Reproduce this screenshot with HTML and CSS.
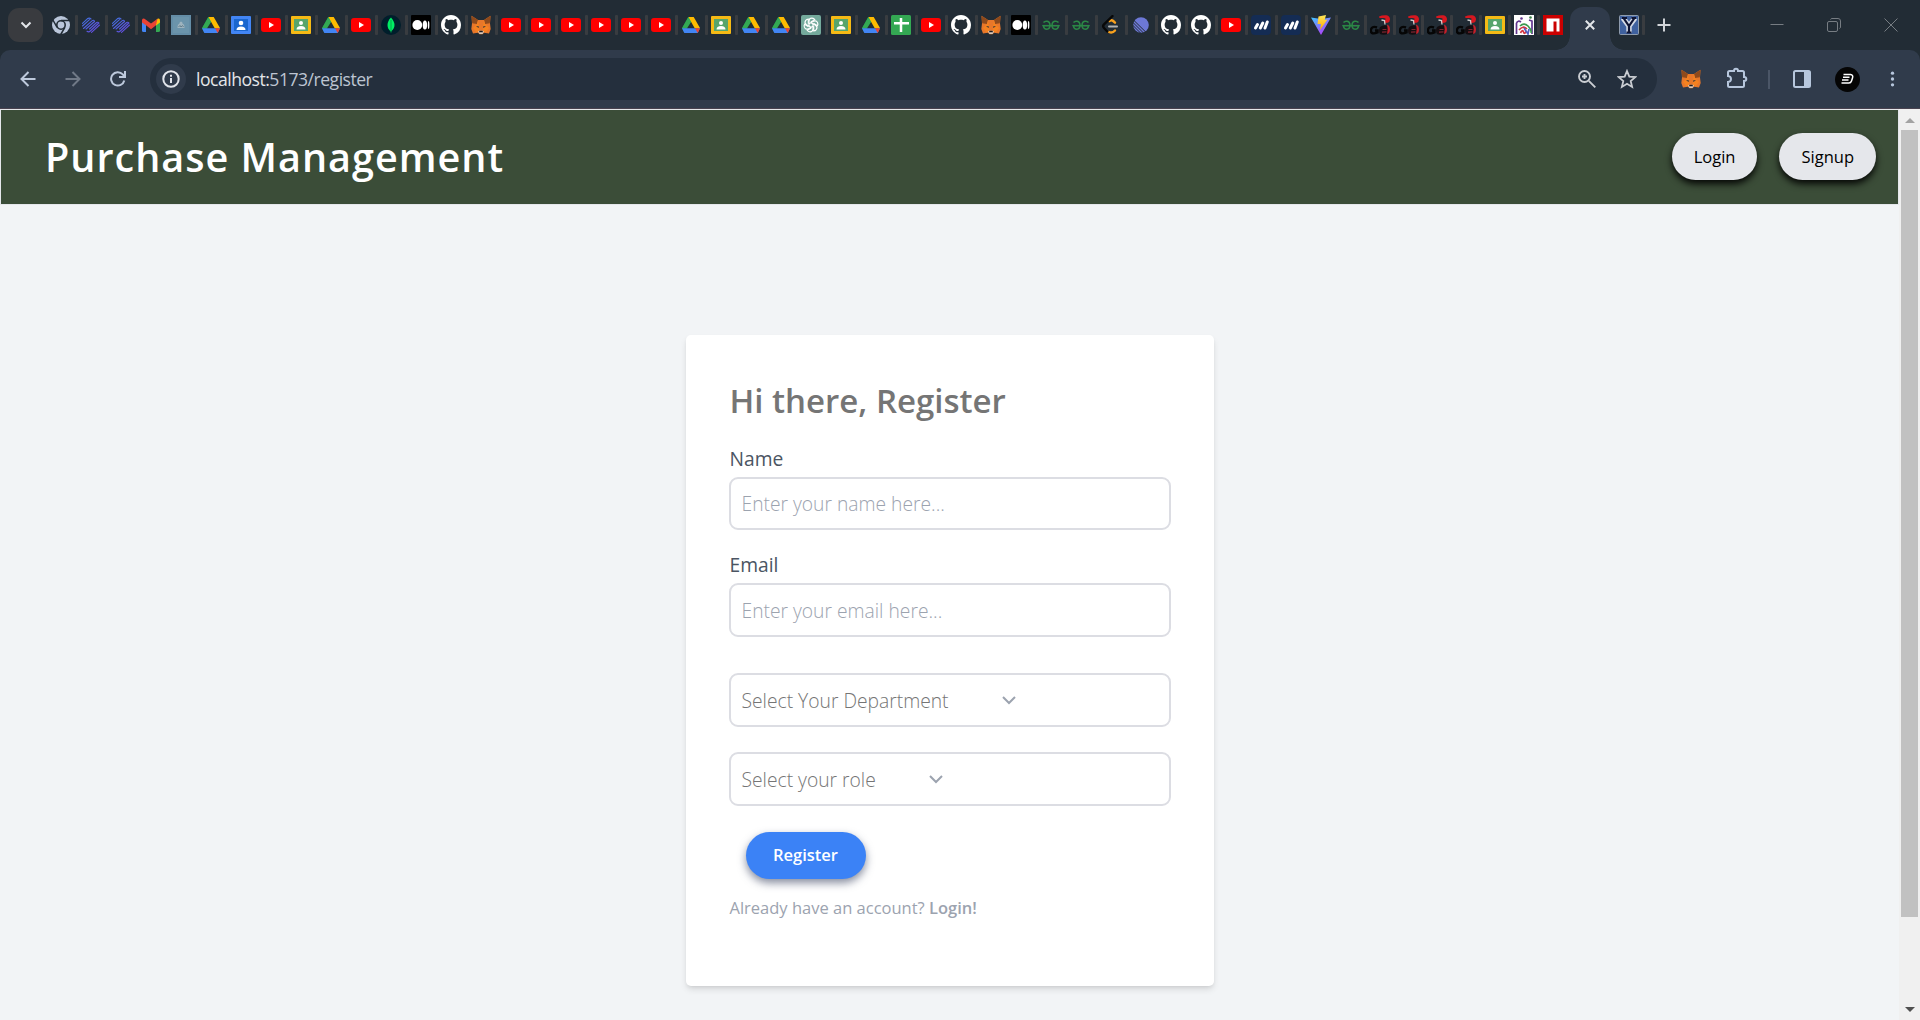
FILE: index.html
```html
<!DOCTYPE html>
<html lang="en">
<head>
<meta charset="utf-8">
<title>Purchase Management</title>
<link rel="stylesheet" href="styles.css">
</head>
<body>
<svg class="sprite" aria-hidden="true">
  <defs>
    <linearGradient id="wave-g" x1="0" y1="0" x2="1" y2="1"><stop offset="0" stop-color="#3f74e0"/><stop offset="1" stop-color="#6a45dc"/></linearGradient>
    <linearGradient id="vite-g" x1="0" y1="0" x2=".6" y2="1"><stop offset="0" stop-color="#41c7ff"/><stop offset="1" stop-color="#b33dfa"/></linearGradient>
    <linearGradient id="bolt-g" x1="0" y1="0" x2="0" y2="1"><stop offset="0" stop-color="#ffe65a"/><stop offset="1" stop-color="#ffa800"/></linearGradient>
  </defs>
  <symbol id="chrome" viewBox="0 0 20 20"><circle cx="10" cy="10" r="9" fill="#bac6da"/><circle cx="10" cy="10" r="4.2" fill="#bac6da" stroke="#222c35" stroke-width="1.6"/><path d="M10 5.5h8.5M6.1 12.3 1.9 5M13.9 12.3 9.7 19.5" stroke="#222c35" stroke-width="1.5"/></symbol>
  <symbol id="wave" viewBox="0 0 20 20"><g fill="none" stroke="url(#wave-g)" stroke-width="1.1" stroke-linecap="round" stroke-linejoin="round"><path d="M1.500 8.300 6.300 3.800Q8.300 2.300 10 4M1.500 11 8.500 4.700M2.500 13.500 11 5.800Q12.300 4.600 13.500 6M5 14 13.500 6.500M6 16.300Q7.800 17.500 9.300 16L17.800 8M8.500 14 15 8Q16.700 6.500 18 8M10.500 17.300 18.500 10"/></g></symbol>
  <symbol id="gmail" viewBox="0 0 20 20"><path d="M1 5v10.500q0 1.500 1.500 1.500H5V9z" fill="#4285f4"/><path d="M15 9v8h2.500q1.500 0 1.500-1.500V5z" fill="#34a853"/><path d="m15 5.500 1.500-1.800Q19 2.700 19 5.500v2L15 10.500z" fill="#fbbc04"/><path d="M1 7.500v-2Q1 2.700 3.500 3.700L10 8.600l6.500-4.900L15 10.300l-5 3.900-5-3.900z" fill="#ea4335"/></symbol>
  <symbol id="photo" viewBox="0 0 20 20"><path fill="#648da6" d="M0 0h20v20H0z"/><path d="M2 2h16v16H2z" fill="#719bb0" opacity=".5"/><path d="M6.500 13q0-4 1.700-4 .3-2.500 1.800-2.500T11.800 9q1.700 0 1.700 4z" fill="#9fb4bf"/><path d="m7.500 12 1.500-1.500 1 1.500 1.500-1.500 1 1.500" stroke="#627d8a" fill="none"/></symbol>
  <symbol id="drive" viewBox="0 0 20 20"><path d="M7.300 2h5.400L5 14.800 3.300 17.500 1 13.200z" fill="#0f9d48"/><path d="M7.300 2h5.400L19 13h-5.400z" fill="#ffba00"/><path d="M10 7 5.900 13.200H1L7.300 2z" fill="#34a853"/><path d="M5.900 13.200H19L16.700 18H3.300L1 13.200z" fill="#4285f4"/><path d="M14 13.200h5L16.700 18z" fill="#ea4335"/></symbol>
  <symbol id="contacts" viewBox="0 0 20 20"><rect y="1" width="20" height="18" rx="1" fill="#4285f4"/><path d="M3 4h14v12H3z" fill="#1a66ce"/><circle cx="10" cy="8" r="2.300" fill="#fff"/><path d="M5.500 15q0-3.500 4.500-3.500t4.500 3.500z" fill="#fff"/></symbol>
  <symbol id="yt" viewBox="0 0 20 20"><rect y="3" width="20" height="14" rx="3" fill="#f00"/><path d="m8 7 5 3-5 3z" fill="#fff"/></symbol>
  <symbol id="class" viewBox="0 0 20 20"><rect y="1" width="20" height="18" rx="1" fill="#f5ba15"/><path d="M3 4h14v12H3z" fill="#57a56b"/><circle cx="10" cy="8" r="2" fill="#fff"/><path d="M5.500 14.500q0-3.500 4.500-3.500t4.500 3.500z" fill="#fff"/></symbol>
  <symbol id="mongo" viewBox="0 0 20 20"><circle cx="10" cy="10" r="10" fill="#001e2b"/><path d="M10 2.500q3.500 4 3.500 7.500T10 16.500Q6.500 14 6.500 10T10 2.500z" fill="#00ed64"/><path d="M10 5v12.500" stroke="#00a84a"/></symbol>
  <symbol id="medium" viewBox="0 0 20 20"><rect width="20" height="20" rx="1" fill="#000"/><circle cx="6.300" cy="10" r="4.900" fill="#fff"/><ellipse cx="13.900" cy="10" rx="2.200" ry="4.500" fill="#fff"/><ellipse cx="17.600" cy="10" rx=".8" ry="4" fill="#fff"/></symbol>
  <symbol id="github" viewBox="0 0 16 16"><path fill="#fff" d="M8 0C3.580 0 0 3.580 0 8c0 3.540 2.290 6.530 5.470 7.590.4.070.55-.17.55-.38 0-.19-.01-.82-.01-1.490-2.010.37-2.530-.49-2.690-.94-.09-.23-.48-.94-.82-1.130-.28-.15-.68-.52-.01-.53.63-.01 1.080.58 1.230.82.72 1.210 1.870.87 2.330.66.07-.52.28-.87.51-1.070-1.780-.2-3.640-.89-3.640-3.950 0-.87.31-1.590.82-2.150-.08-.2-.36-1.020.08-2.120 0 0 .67-.21 2.200.82.640-.18 1.320-.27 2-.27s1.360.09 2 .27c1.530-1.040 2.200-.82 2.200-.82.44 1.100.16 1.920.08 2.120.51.56.82 1.270.82 2.150 0 3.070-1.870 3.750-3.650 3.950.29.25.54.73.54 1.480 0 1.070-.01 1.930-.01 2.200 0 .21.15.46.55.38A8.010 8.010 0 0 0 16 8c0-4.420-3.580-8-8-8z"/></symbol>
  <symbol id="fox" viewBox="0 0 20 20"><path d="M.5.800 7 5h6L19.500.800l-.5 7.700.7 5.500-1.700 4.500-5-.8-1.500 1.500h-3L7 17.700l-5 .8L.3 14 1 8.500z" fill="#e8772a"/><path d="m.5.800 6.500 4.200L6 9 1.200 8.300zM19.500.800 13 5l1 4 4.800-.7z" fill="#8f4a1c"/><path d="m7 5 1 6v6H5l-3-4 4-4zM13 5l-1 6v6h3l3-4-4-4z" fill="#f58220"/><path d="m5 11 3 .5-.5 1.500zM15 11l-3 .5.5 1.500z" fill="#31333a"/><path d="m7 16.500 1-.7h4l1 .7-1.500 2.500h-3z" fill="#dccab9"/><path d="M8.500 15.700h3l.5 1.500H8z" fill="#1c1b1d"/></symbol>
  <symbol id="gpt" viewBox="0 0 20 20"><rect width="20" height="20" rx="2" fill="#74aa9c"/><g fill="none" stroke="#fff" stroke-width="1.150"><path id="petal" d="M8 11.200V6Q8.200 3 11 3.100q2 .2 2.800 1.600L9.800 7"/><use href="#petal" transform="rotate(60 10 10)"/><use href="#petal" transform="rotate(120 10 10)"/><use href="#petal" transform="rotate(180 10 10)"/><use href="#petal" transform="rotate(240 10 10)"/><use href="#petal" transform="rotate(300 10 10)"/></g></symbol>
  <symbol id="sheet" viewBox="0 0 20 20"><rect width="20" height="20" rx="1.500" fill="#34a853"/><path d="M3 8.200h15M10 3v14" stroke="#fff" stroke-width="2.500"/></symbol>
  <symbol id="gfg" viewBox="0 0 20 20"><path d="M2.500 7.500Q4 5.800 6.300 6.300 9 7 9 10.300q0 3.900-3.200 3.900-2.800 0-3.500-3.400H17.700q-.7 3.400-3.500 3.400-3.200 0-3.200-3.900 0-3.300 2.700-4 2.300-.5 3.800 1.200" fill="none" stroke="#2b8746" stroke-width="1.500"/><path d="M1.500 10.500h17" stroke="#2b8746" stroke-width="1.200"/></symbol>
  <symbol id="leet" viewBox="0 0 20 20"><g fill="none" stroke-width="2.400" stroke-linecap="round"><path d="m8.500 6 .5-.4q1.700-1 3.200.4l1.800 1.700M8 17q3.500 1.500 6-1.500" stroke="#f7a01d"/><path d="m11.500 1-8.500 8.400Q1.300 11.200 3 13l3.300 3.500" stroke="#080808"/><path d="M8 11.500h8" stroke="#b3b3b3" stroke-width="2"/></g></symbol>
  <symbol id="linear" viewBox="0 0 20 20"><circle cx="10" cy="10" r="7.800" fill="#6d78d6"/><path d="m1.500 7 11.500 11.500M1.500 10l9 9M1.500 13.300 7 18.800M3 5.500l12.500 12.300" stroke="#222c35" stroke-width="1"/></symbol>
  <symbol id="mono" viewBox="0 0 20 20"><rect width="20" height="20" rx="4" fill="#142c54"/><path d="m4.500 13 2-3.500M9.300 13l2.500-5M14 13l2.300-6" stroke="#fff" stroke-width="3" stroke-linecap="round"/></symbol>
  <symbol id="vite" viewBox="0 0 20 20"><path d="m0 2.500 10 1.500L20 2.500 10 20z" fill="url(#vite-g)"/><path d="m7.500 1.500 7.500-1.500-1.300 5 2.800-.4L9 15l1-6H6.500z" fill="url(#bolt-g)"/></symbol>
  <symbol id="go" viewBox="0 0 20 20"><path d="M9 1.500Q12 0 16.500.3 20 1 20 4.500q0 2.500-2.500 3.300L14 8V5.500l2-1.500-2-1H9.500z" fill="#d7171f"/><path d="M7 12.500Q1.500 10.500.800 15.500 1 20 7.500 17.500V15.500H5" fill="none" stroke="#050505" stroke-width="2.400"/><path d="M10 12q4-3 8-1v8q-5 1.500-8 0-2-3 0-7z" fill="#130d10"/><path d="M17 9.500q3 1 3 5T17 19q1.500-4.500 0-9.500z" fill="#c2202a"/><path d="M12.500 14.500h4M12 17.200l4.500-.4" stroke="#7b2630" stroke-width="1.200"/><path d="m11.500 5 3 .5.500 4" stroke="#ccc" fill="none" stroke-width="1.300"/></symbol>
  <symbol id="doodle" viewBox="0 0 20 20"><path fill="#fff" d="M0 0h20v20H0z"/><g fill="none" stroke-width="1.700"><path d="M2.500 19V8M2.500 8Q4 5 7 7M15 5l3 1v13" stroke="#63358f"/><path d="M6 11q4-4 8 0t3 7" stroke="#3c9950"/><path d="M5 15q4-5 8-1M6.500 18q2-4 3-1t3-1" stroke="#d13542"/><path d="m10 13 4 6 1-5" stroke="#525fc2"/></g><circle cx="7.500" cy="3.500" r="1.300" fill="#63358f"/><circle cx="16.500" cy="2.500" r="1.300" fill="#3b8146"/></symbol>
  <symbol id="npm" viewBox="0 0 20 20"><path fill="#cb0000" d="M0 0h20v20H0z"/><path fill="#fff" d="M3.500 3.500h13v13h-3v-10h-3v10h-7z"/></symbol>
  <symbol id="ybox" viewBox="0 0 20 20"><rect x=".5" y=".5" width="19" height="19" rx="1" fill="#3f619f" stroke="#8e9bad"/><path d="m4 3 6 8 6-8M10 10v8" stroke="#d4dae6" stroke-width="5.400" fill="none"/><path d="m4.500 3 5.500 8 5.500-8M10 10v7.500M3 3h5M12.500 3h4.500M7.500 17.500h5" stroke="#0e1434" stroke-width="2.200" fill="none"/></symbol>
</svg>

<header class="browser">
  <div class="tabstrip">
    <button class="tab-search"><svg viewBox="0 0 12 8"><path d="m1.500 1.500 4.500 4.500 4.500-4.500"/></svg></button>
    <div class="tabs">
      <span class="tab"><svg><use href="#chrome"/></svg></span>
      <span class="tab"><svg><use href="#wave"/></svg></span>
      <span class="tab"><svg><use href="#wave"/></svg></span>
      <span class="tab"><svg><use href="#gmail"/></svg></span>
      <span class="tab"><svg><use href="#photo"/></svg></span>
      <span class="tab"><svg><use href="#drive"/></svg></span>
      <span class="tab"><svg><use href="#contacts"/></svg></span>
      <span class="tab"><svg><use href="#yt"/></svg></span>
      <span class="tab"><svg><use href="#class"/></svg></span>
      <span class="tab"><svg><use href="#drive"/></svg></span>
      <span class="tab"><svg><use href="#yt"/></svg></span>
      <span class="tab"><svg><use href="#mongo"/></svg></span>
      <span class="tab"><svg><use href="#medium"/></svg></span>
      <span class="tab"><svg><use href="#github"/></svg></span>
      <span class="tab"><svg><use href="#fox"/></svg></span>
      <span class="tab"><svg><use href="#yt"/></svg></span>
      <span class="tab"><svg><use href="#yt"/></svg></span>
      <span class="tab"><svg><use href="#yt"/></svg></span>
      <span class="tab"><svg><use href="#yt"/></svg></span>
      <span class="tab"><svg><use href="#yt"/></svg></span>
      <span class="tab"><svg><use href="#yt"/></svg></span>
      <span class="tab"><svg><use href="#drive"/></svg></span>
      <span class="tab"><svg><use href="#class"/></svg></span>
      <span class="tab"><svg><use href="#drive"/></svg></span>
      <span class="tab"><svg><use href="#drive"/></svg></span>
      <span class="tab"><svg><use href="#gpt"/></svg></span>
      <span class="tab"><svg><use href="#class"/></svg></span>
      <span class="tab"><svg><use href="#drive"/></svg></span>
      <span class="tab"><svg><use href="#sheet"/></svg></span>
      <span class="tab"><svg><use href="#yt"/></svg></span>
      <span class="tab"><svg><use href="#github"/></svg></span>
      <span class="tab"><svg><use href="#fox"/></svg></span>
      <span class="tab"><svg><use href="#medium"/></svg></span>
      <span class="tab"><svg><use href="#gfg"/></svg></span>
      <span class="tab"><svg><use href="#gfg"/></svg></span>
      <span class="tab"><svg><use href="#leet"/></svg></span>
      <span class="tab"><svg><use href="#linear"/></svg></span>
      <span class="tab"><svg><use href="#github"/></svg></span>
      <span class="tab"><svg><use href="#github"/></svg></span>
      <span class="tab"><svg><use href="#yt"/></svg></span>
      <span class="tab"><svg><use href="#mono"/></svg></span>
      <span class="tab"><svg><use href="#mono"/></svg></span>
      <span class="tab"><svg><use href="#vite"/></svg></span>
      <span class="tab narrow"><svg><use href="#gfg"/></svg></span>
      <span class="tab narrow"><svg><use href="#go"/></svg></span>
      <span class="tab narrow"><svg><use href="#go"/></svg></span>
      <span class="tab narrow"><svg><use href="#go"/></svg></span>
      <span class="tab narrow"><svg><use href="#go"/></svg></span>
      <span class="tab narrow"><svg><use href="#class"/></svg></span>
      <span class="tab narrow"><svg><use href="#doodle"/></svg></span>
      <span class="tab narrow last"><svg><use href="#npm"/></svg></span>
    </div>
    <div class="tab-active"><svg viewBox="0 0 10 10"><path d="m.8.8 8.400 8.400M9.200.8.8 9.200"/></svg></div>
    <span class="tab after"><svg><use href="#ybox"/></svg></span>
    <svg class="new-tab" viewBox="0 0 14 14"><path d="M7 .5v13M.5 7h13"/></svg>
    <div class="window-controls">
      <svg viewBox="0 0 14 14"><path d="M.5 6.500h13"/></svg>
      <svg viewBox="0 0 14 14"><rect x=".5" y="3.500" width="10" height="10" rx="1.500"/><path d="M3.500 1.500q.5-1 1.500-1h6q2.500 0 2.500 2.500v6q0 1-1 1.500"/></svg>
      <svg viewBox="0 0 14 14"><path d="m.5.5 13 13M13.500.5l-13 13"/></svg>
    </div>
  </div>
  <div class="toolbar">
    <div class="nav">
      <svg viewBox="0 0 16 16"><path d="M15.500 8H2M8.500 1 1.500 8l7 7"/></svg>
      <svg class="dim" viewBox="0 0 16 16"><path d="M.5 8H14M7.500 1l7 7-7 7"/></svg>
      <svg viewBox="0 0 16 16"><path d="M14.300 9.500A6.700 6.700 0 1 1 12.800 3.400L14.500 5.500M15 0v6H9"/></svg>
    </div>
    <div class="omnibox">
      <span class="site-info"><svg viewBox="0 0 18 18"><circle cx="9" cy="9" r="7.700"/><path d="M9 8v5M9 4.800v2"/></svg></span>
      <span class="url">localhost:<span>5173/register</span></span>
      <svg class="magnify" viewBox="0 0 18 18"><circle cx="6.500" cy="6.500" r="5.500"/><path d="m10.800 10.800 6.500 6.500M6.500 4v5M4 6.500h5"/></svg>
      <svg class="star" viewBox="0 0 20 20"><path d="m10 2 2.300 5.600 6 .5-4.600 3.900 1.400 5.900-5.100-3.100-5.100 3.100L6.300 12 1.700 8.100l6-.5z"/></svg>
    </div>
    <svg class="fox" viewBox="0 0 20 20"><use href="#fox"/></svg>
    <svg class="puzzle" viewBox="0 0 22 22"><path d="M2 5.500Q2 4 3.500 4H8q0-2.300 2-2.300T12 4h4.500Q18 4 18 5.500V10q2.300 0 2.300 2T18 14v4.500q0 1.500-1.500 1.500h-13Q2 20 2 18.500V15q3-.3 3-3T2 9z"/></svg>
    <i class="divider"></i>
    <svg class="panel" viewBox="0 0 18 18"><rect x="1" y="1" width="16" height="16" rx="1.500"/><path d="M11 1h6v16h-6z"/></svg>
    <svg class="avatar" viewBox="0 0 25 25"><circle cx="12.500" cy="12.500" r="12.500"/><path d="M8.500 7.500h7q3 .3 2 3.500l-1 3q-.7 2-2.500 2H6.500M8 10.200h6.500M7 13h6.500"/></svg>
    <svg class="kebab" viewBox="0 0 6 18"><circle cx="3" cy="2" r="2"/><circle cx="3" cy="9" r="2"/><circle cx="3" cy="16" r="2"/></svg>
  </div>
</header>

<div class="viewport">
  <div class="page">
    <header class="site-header">
      <h1>Purchase Management</h1>
      <nav><button class="pill">Login</button><button class="pill">Signup</button></nav>
    </header>
    <main>
      <form class="card">
        <h2>Hi there, Register</h2>
        <label for="name">Name</label>
        <input class="field first" id="name" type="text" placeholder="Enter your name here...">
        <label for="email">Email</label>
        <input class="field" id="email" type="email" placeholder="Enter your email here...">
        <div class="field select department"><span>Select Your Department</span><svg viewBox="0 0 14 9"><path d="m1 1 6 6 6-6"/></svg></div>
        <div class="field select role"><span>Select your role</span><svg viewBox="0 0 14 9"><path d="m1 1 6 6 6-6"/></svg></div>
        <button class="submit" type="button">Register</button>
        <p class="switch">Already have an account? <b>Login!</b></p>
      </form>
    </main>
  </div>
  <div class="scrollbar"><i class="up"></i><i class="thumb"></i><i class="down"></i></div>
</div>
</body>
</html>
```
FILE: styles.css
```css
* { box-sizing: border-box; }
body {
  margin: 0;
  height: 1020px;
  overflow: hidden;
  display: flex;
  flex-direction: column;
  font-family: "Open Sans", "Noto Sans", sans-serif;
  background: #f2f4f6;
}
button { border: 0; padding: 0; font: inherit; }
svg { flex: none; fill: none; }
.sprite { position: absolute; width: 0; height: 0; }

/* Browser frame */
.browser { flex: none; height: 109px; background: #222c35; }
.tabstrip { height: 50px; display: flex; align-items: center; }
.tab-search {
  flex: none; width: 35px; height: 34px; margin: 0 5px 0 8px;
  display: grid; place-items: center;
  border-radius: 11px; background: #393b3f;
}
.tab-search svg { width: 12px; height: 8px; stroke: #e3e6ea; stroke-width: 2; }
.tabs { display: flex; width: 1522px; }
.tab { flex: none; width: 30px; height: 20px; padding-left: 3px; display: flex; justify-content: space-between; }
.tab svg { width: 20px; height: 20px; }
.tab::after { content: ""; width: 3px; height: 20px; border-radius: 1px; background: #393c40; }
.tab.narrow { width: 28.8px; }
.tab.last::after { display: none; }
.tab-active {
  position: relative; flex: none;
  width: 40px; height: 43px; margin-top: 7px; padding-bottom: 7px;
  display: grid; place-items: center;
  border-radius: 13px 13px 0 0; background: #303b4b;
}
.tab-active svg { width: 10px; height: 10px; stroke: #e3e6ea; stroke-width: 2; }
.tab-active::before, .tab-active::after { content: ""; position: absolute; bottom: 0; width: 14px; height: 14px; }
.tab-active::before { right: 100%; background: radial-gradient(circle at 0 0, transparent 13.5px, #303b4b 14px); }
.tab-active::after { left: 100%; background: radial-gradient(circle at 100% 0, transparent 13.5px, #303b4b 14px); }
.tab.after { width: 29px; margin-left: 6px; }
.new-tab { width: 14px; height: 14px; margin-left: 12px; stroke: #d2d5d9; stroke-width: 2; }
.window-controls { flex: 1; display: flex; justify-content: flex-end; gap: 43px; padding-right: 22px; }
.window-controls svg { width: 14px; height: 14px; stroke: #777d83; }

.toolbar {
  height: 59px; display: flex; align-items: center;
  border-radius: 10px 10px 0 0; border-bottom: 1px solid #494350; background: #303b4b;
}
.nav { display: flex; gap: 29px; padding-left: 20px; width: 150px; }
.nav svg { width: 16px; height: 16px; stroke: #bdc9dc; stroke-width: 2; }
.nav .dim { stroke: #707987; }
.omnibox {
  width: 1507px; height: 42px; padding: 0 20px 0 6px;
  display: flex; align-items: center;
  border-radius: 21px; background: #242f3d;
}
.site-info { width: 30px; height: 30px; display: grid; place-items: center; border-radius: 50%; background: #303b4b; }
.site-info svg { width: 18px; height: 18px; stroke: #e1e4ea; stroke-width: 2; }
.url { flex: 1; margin-left: 10px; font-size: 17.600px; letter-spacing: -.5px; line-height: 24px; padding-bottom: 1px; color: #e4e6e9; }
.url span { color: #bdc5d2; }
.magnify { width: 18px; height: 18px; stroke: #cacdd2; stroke-width: 1.900; }
.star { width: 20px; height: 20px; margin-left: 21px; stroke: #cacdd2; stroke-width: 1.800; }
.toolbar > .fox { width: 20px; height: 20px; margin-left: 24px; }
.puzzle { width: 22px; height: 22px; margin-left: 25px; margin-top: -2px; stroke: #b7c7dd; stroke-width: 2; }
.divider { width: 2px; height: 19px; margin-left: 20px; background: #4b5667; }
.panel { width: 18px; height: 18px; margin-left: 23px; stroke: #b7c7dd; stroke-width: 2; }
.panel path { fill: #b7c7dd; stroke: none; }
.avatar { width: 25px; height: 25px; margin-left: 24px; }
.avatar circle { fill: #050505; }
.avatar path { stroke: #fff; stroke-width: 1.500; }
.kebab { width: 5px; height: 18px; margin-left: 30px; fill: #b7c7dd; }

/* Page */
.viewport { flex: 1; display: flex; min-height: 0; }
.page { flex: 1; min-width: 0; }
.site-header {
  height: 96px; padding: 0 22px 0 44px;
  display: flex; align-items: center; justify-content: space-between;
  border: 1px solid #e5e7eb; background: #3b4d38;
}
.site-header h1 { margin: 0; font-size: 39.600px; font-weight: 600; line-height: 44px; letter-spacing: .025em; color: #fff; }
.site-header nav { display: flex; gap: 22px; padding-bottom: 2px; }
.pill {
  height: 47px; padding: 0 22px; border-radius: 24px;
  font-size: 16.500px; font-weight: 500; color: #000; background: #e5e7eb;
  box-shadow: 0 4px 7px rgba(0, 0, 0, .9);
}
main { display: flex; justify-content: center; padding-top: 130px; }
.card {
  width: 528px; height: 651px; padding: 46px 43px 0;
  display: flex; flex-direction: column;
  border-radius: 5px; background: #fff;
  box-shadow: 0 4px 7px -1px rgba(0, 0, 0, .12), 0 2px 4px -2px rgba(0, 0, 0, .1);
}
.card h2 { margin: 0 0 24px 1px; font-size: 33px; font-weight: 600; line-height: 40px; color: #757575; }
.card label { margin-left: 1px; font-size: 19.250px; line-height: 28px; color: #4b5563; }
.field {
  width: 442px; height: 54px; margin-top: 4px; padding: 0 11px;
  border: 2px solid #dcdde3; border-radius: 9px; background: #fff;
  font-family: inherit; font-size: 19.250px; font-weight: 300; outline: 0;
}
.first { height: 53px; margin-bottom: 21px; }
.field::placeholder { color: #9ca3af; opacity: 1; }
.select { display: flex; align-items: center; color: #757575; }
.select svg { width: 14px; height: 9px; stroke: #9ca3af; stroke-width: 2; margin-left: 53px; }
.department { margin-top: 36px; }
.role { margin-top: 25px; }
.submit {
  width: 120px; height: 47px; margin: 26px 0 0 17px; padding-bottom: 2px; border-radius: 24px;
  font-size: 16.500px; font-weight: 600; color: #fff; background: #3b82f6;
  box-shadow: 0 4px 8px rgba(55, 65, 95, .6);
}
.switch { margin: 17px 0 0 1px; font-size: 16.500px; line-height: 24px; color: #9ca3af; }
.switch b { font-weight: 600; }

.scrollbar { width: 21px; display: flex; flex-direction: column; align-items: center; background: #f0f0f0; }
.up, .down { border: 5px solid transparent; }
.up { border-top: 0; border-bottom-color: #a3a3a3; margin: 9px 0 7px; }
.thumb { width: 17px; height: 787px; background: #c1c1c1; }
.down { border-bottom: 0; border-top-color: #505050; margin-top: auto; margin-bottom: 8px; }
```
